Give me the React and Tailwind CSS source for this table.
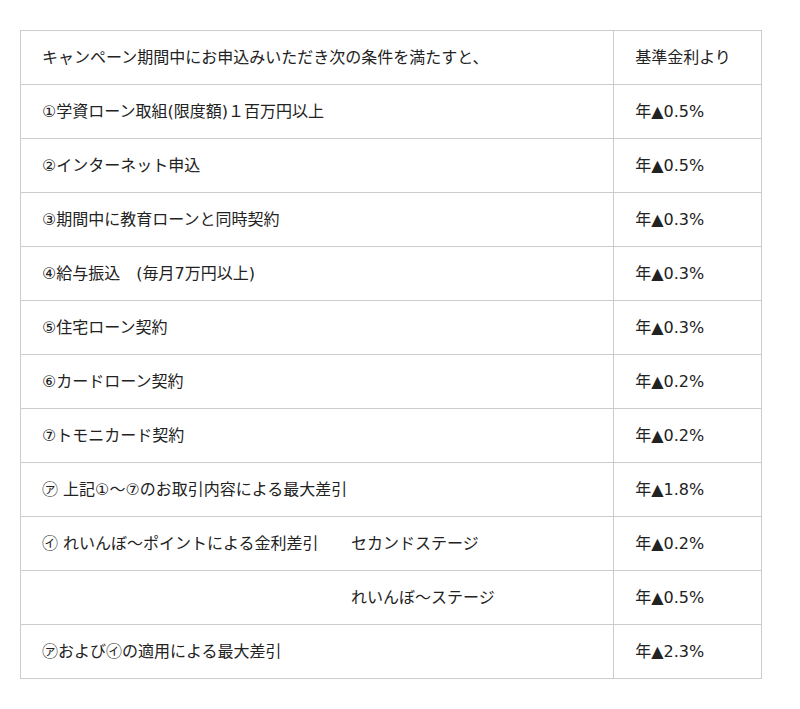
import React from 'react';

const rows = [
  { left: 'キャンペーン期間中にお申込みいただき次の条件を満たすと、', right: '基準金利より' },
  { left: '①学資ローン取組(限度額)１百万円以上', right: '年▲0.5%' },
  { left: '②インターネット申込', right: '年▲0.5%' },
  { left: '③期間中に教育ローンと同時契約', right: '年▲0.3%' },
  { left: '④給与振込　(毎月7万円以上)', right: '年▲0.3%' },
  { left: '⑤住宅ローン契約', right: '年▲0.3%' },
  { left: '⑥カードローン契約', right: '年▲0.2%' },
  { left: '⑦トモニカード契約', right: '年▲0.2%' },
  { left: '㋐ 上記①～⑦のお取引内容による最大差引', right: '年▲1.8%' },
  { left: '㋑ れいんぼ～ポイントによる金利差引', sub: 'セカンドステージ', right: '年▲0.2%' },
  { left: '', sub: 'れいんぼ～ステージ', right: '年▲0.5%' },
  { left: '㋐および㋑の適用による最大差引', right: '年▲2.3%' },
];

export default function App() {
  return (
    <div
      className="min-h-[709px] bg-white pt-[30px] pl-[20px] text-[16px] text-[#222]"
      style={{ fontFamily: '"DejaVu Sans", "Noto Sans CJK JP", sans-serif' }}
    >
      <div className="w-[742px] border-l border-t border-[#cccccc]">
        {rows.map((r, i) => (
          <div key={i} className="flex h-[54px]">
            <div className="w-[594px] h-full border-r border-b border-[#cccccc] pl-[21px] flex items-center">
              {r.sub !== undefined ? (
                <>
                  <span className="w-[309px] shrink-0">{r.left}</span>
                  <span>{r.sub}</span>
                </>
              ) : (
                <span>{r.left}</span>
              )}
            </div>
            <div className="w-[148px] h-full border-r border-b border-[#cccccc] pl-[21px] flex items-center">
              {r.right}
            </div>
          </div>
        ))}
      </div>
    </div>
  );
}
